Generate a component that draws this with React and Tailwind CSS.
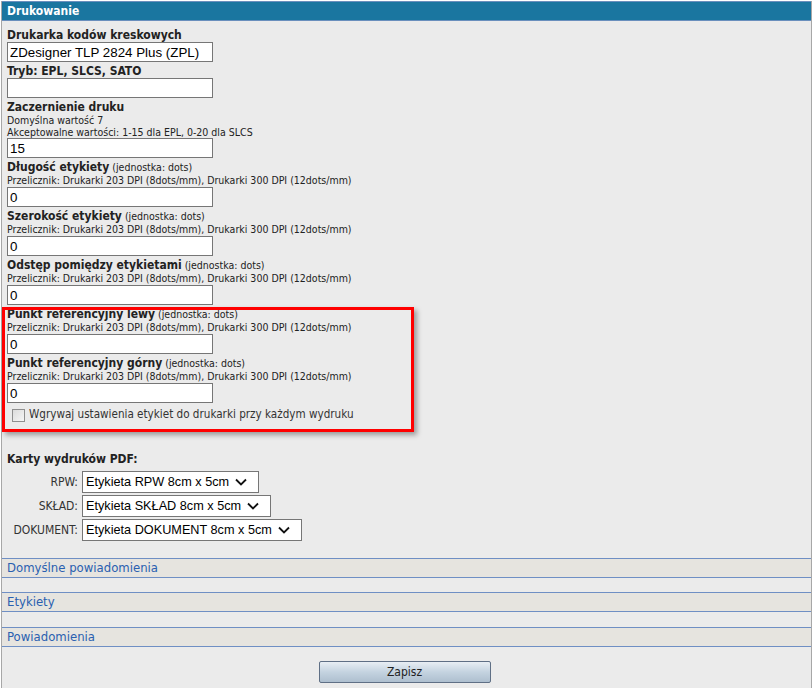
import React from 'react';

const ui = { fontFamily: '"DejaVu Sans Condensed", "DejaVu Sans", Tahoma, sans-serif' };
const arial = { fontFamily: '"Liberation Sans", Arial, sans-serif' };

const przelicznik = 'Przelicznik: Drukarki 203 DPI (8dots/mm), Drukarki 300 DPI (12dots/mm)';

function TextInput({ value }) {
    return (
        <input
            type="text"
            defaultValue={value}
            style={arial}
            className="block w-[206px] h-[20px] border border-[#767676] bg-white px-[2px] text-[13.33px] leading-none text-black outline-none"
        />
    );
}

function Field({ label, unit, notes = [], noteHeight = 'h-[12px]', value }) {
    return (
        <div className="flex flex-col">
            <div className="h-[15px] pt-[2px] text-[12px] leading-[13px] font-bold text-[#222] whitespace-nowrap">
                {label}
                {unit && <span className="font-normal text-[10.5px]"> (jednostka: dots)</span>}
            </div>
            {notes.map((n) => (
                <div key={n} className={`${noteHeight} text-[10.5px] leading-[12px] text-[#222] whitespace-nowrap`}>{n}</div>
            ))}
            <TextInput value={value} />
        </div>
    );
}

function Chevron() {
    return (
        <svg width="12" height="8" viewBox="0 0 12 8" className="ml-auto shrink-0">
            <path d="M1 1.5 L6 6.5 L11 1.5" fill="none" stroke="#111" strokeWidth="1.8" />
        </svg>
    );
}

function SelectRow({ label, value }) {
    return (
        <div className="flex items-center">
            <div className="w-[75px] text-right pr-[4px] text-[12px] text-[#333]">{label}</div>
            <div
                style={arial}
                className="flex items-center h-[22px] border border-[#767676] bg-white pl-[3px] pr-[11px] text-[12.7px] text-black gap-[6px]"
            >
                <span className="leading-none">{value}</span>
                <Chevron />
            </div>
        </div>
    );
}

function SectionBar({ title }) {
    return (
        <div className="h-[20px] border-y border-[#6f8fc4] bg-[#e6e4df] px-[5px] flex items-center text-[13px] text-[#2a60b0]">
            {title}
        </div>
    );
}

export default function App() {
    return (
        <div style={ui} className="w-[812px] h-[688px] bg-white pt-[1px] overflow-hidden">
            <div className="relative ml-[1px] w-[811px] h-[687px] border-l border-r border-[#a7a7a7] bg-[#ebebeb] flex flex-col">
                <div className="h-[20px] shrink-0 bg-[#1a76a0] border-y border-[#6a8fbd] px-[5px] flex items-center text-[12px] font-bold text-white">
                    Drukowanie
                </div>

                <div className="pl-[5px] pt-[6px] flex flex-col gap-[1px]">
                    <Field label="Drukarka kodów kreskowych" value="ZDesigner TLP 2824 Plus (ZPL)" />
                    <Field label="Tryb: EPL, SLCS, SATO" value="" />
                    <Field
                        label="Zaczernienie druku"
                        notes={['Domyślna wartość 7', 'Akceptowalne wartości: 1-15 dla EPL, 0-20 dla SLCS']}
                        value="15"
                    />
                    <Field label="Długość etykiety" unit notes={[przelicznik]} noteHeight="h-[13px]" value="0" />
                    <Field label="Szerokość etykiety" unit notes={[przelicznik]} noteHeight="h-[13px]" value="0" />
                    <Field label="Odstęp pomiędzy etykietami" unit notes={[przelicznik]} noteHeight="h-[13px]" value="0" />
                    <Field label="Punkt referencyjny lewy" unit notes={[przelicznik]} noteHeight="h-[13px]" value="0" />
                    <Field label="Punkt referencyjny górny" unit notes={[przelicznik]} noteHeight="h-[13px]" value="0" />
                    <label className="flex items-center gap-[4px] mt-[3px] ml-[5px] h-[16px] text-[11.6px] text-[#333]">
                        <span className="w-[13px] h-[13px] border border-[#8f8f8f] bg-gradient-to-br from-[#dcdcdc] to-[#f6f6f6]" />
                        Wgrywaj ustawienia etykiet do drukarki przy każdym wydruku
                    </label>

                    <div className="mt-[28px] h-[15px] leading-[15px] text-[12px] font-bold text-[#222]">Karty wydruków PDF:</div>
                    <div className="flex flex-col gap-[2px] mt-[3px]">
                        <SelectRow label="RPW:" value="Etykieta RPW 8cm x 5cm" />
                        <SelectRow label="SKŁAD:" value="Etykieta SKŁAD 8cm x 5cm" />
                        <SelectRow label="DOKUMENT:" value="Etykieta DOKUMENT 8cm x 5cm" />
                    </div>
                </div>

                <div className="mt-[17px] flex flex-col">
                    <SectionBar title="Domyślne powiadomienia" />
                    <div className="h-[14px]" />
                    <SectionBar title="Etykiety" />
                    <div className="h-[15px]" />
                    <SectionBar title="Powiadomienia" />
                </div>

                <div className="flex justify-center pt-[14px] pr-[4px]">
                    <button className="w-[172px] h-[22px] rounded-[2px] border border-[#5f6f85] bg-gradient-to-b from-[#e8eef4] via-[#c4d3e0] to-[#aebfcf] text-[12px] text-[#222]">
                        Zapisz
                    </button>
                </div>

                <div className="absolute left-[0px] top-[306px] w-[412px] h-[125px] border-[3px] border-[#ff0000] shadow-[3px_3px_5px_rgba(0,0,0,0.35)] pointer-events-none" />
            </div>
        </div>
    );
}
